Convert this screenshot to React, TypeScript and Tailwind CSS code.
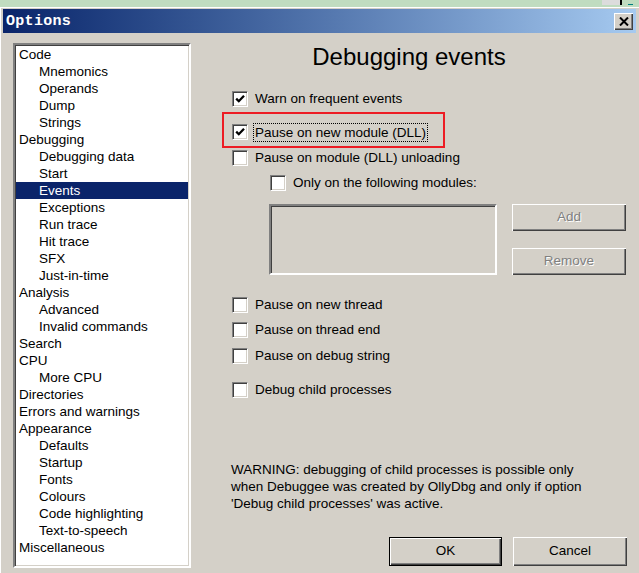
import React from "react";

const font = { fontFamily: '"Liberation Sans", Arial, sans-serif' };

const treeItems: { label: string; level: number; selected?: boolean }[] = [
  { label: "Code", level: 0 },
  { label: "Mnemonics", level: 1 },
  { label: "Operands", level: 1 },
  { label: "Dump", level: 1 },
  { label: "Strings", level: 1 },
  { label: "Debugging", level: 0 },
  { label: "Debugging data", level: 1 },
  { label: "Start", level: 1 },
  { label: "Events", level: 1, selected: true },
  { label: "Exceptions", level: 1 },
  { label: "Run trace", level: 1 },
  { label: "Hit trace", level: 1 },
  { label: "SFX", level: 1 },
  { label: "Just-in-time", level: 1 },
  { label: "Analysis", level: 0 },
  { label: "Advanced", level: 1 },
  { label: "Invalid commands", level: 1 },
  { label: "Search", level: 0 },
  { label: "CPU", level: 0 },
  { label: "More CPU", level: 1 },
  { label: "Directories", level: 0 },
  { label: "Errors and warnings", level: 0 },
  { label: "Appearance", level: 0 },
  { label: "Defaults", level: 1 },
  { label: "Startup", level: 1 },
  { label: "Fonts", level: 1 },
  { label: "Colours", level: 1 },
  { label: "Code highlighting", level: 1 },
  { label: "Text-to-speech", level: 1 },
  { label: "Miscellaneous", level: 0 },
];

function Checkbox({ checked }: { checked?: boolean }) {
  return (
    <span className="flex h-[16px] w-[16px] shrink-0 border border-b-white border-l-[#808080] border-r-white border-t-[#808080] bg-white shadow-[inset_1px_1px_0_#404040,inset_-1px_-1px_0_#d4d0c8]">
      {checked && (
        <svg width="14" height="14" viewBox="0 0 14 14">
          <path d="M3.2 6.6 L5.8 9.2 L11 3.8" fill="none" stroke="#000" strokeWidth="2.3" />
        </svg>
      )}
    </span>
  );
}

function CheckRow({ label, checked, className }: { label: string; checked?: boolean; className: string }) {
  return (
    <div className={`flex h-[16px] items-center gap-[7px] ${className}`}>
      <Checkbox checked={checked} />
      <span className="whitespace-nowrap text-[13.5px] leading-[16px] text-black">{label}</span>
    </div>
  );
}

const raised =
  "bg-[#d4d0c8] shadow-[inset_1px_1px_0_#ffffff,inset_-1px_-1px_0_#404040,inset_-2px_-2px_0_#808080]";

export default function App() {
  return (
    <div className="flex h-[573px] w-[639px] flex-col overflow-hidden bg-[#d4d0c8]" style={font}>
      {/* desktop strip above the dialog */}
      <div className="flex h-[7px] items-start justify-end bg-[#c0dcc0] pr-[6px]">
        <div className="mt-0 h-[5px] w-[18px] bg-[#dcdcdc]" />
        <div className="h-[5px] w-[2px] bg-black" />
        <div className="ml-[6px] mt-[4px] h-[1px] w-[5px] bg-[#008080]" />
      </div>

      <div className="flex flex-1 flex-col px-[3px] pt-[2px] shadow-[inset_1px_1px_0_#ffffff]">
        {/* title bar */}
        <div className="flex h-[24px] items-center justify-between bg-gradient-to-r from-[#0a246a] to-[#a6caf0] pl-[3px] pr-[3px]">
          <span
            className="text-[15px] font-bold leading-none tracking-[0.3px] text-white"
            style={{ fontFamily: '"Liberation Mono", "DejaVu Sans Mono", monospace' }}
          >
            Options
          </span>
          <button className={`flex h-[17px] w-[19px] items-center justify-center ${raised}`}>
            <svg width="10" height="9" viewBox="0 0 10 9">
              <path d="M1 0.5 L9 8.5 M9 0.5 L1 8.5" stroke="#000" strokeWidth="2" />
            </svg>
          </button>
        </div>

        <div className="flex flex-1 pl-[10px] pt-[10px]">
          {/* tree list */}
          <div className="h-[525px] w-[178px] border-2 border-b-white border-l-[#808080] border-r-white border-t-[#808080] bg-white shadow-[inset_1px_1px_0_#404040,inset_-1px_-1px_0_#d4d0c8]">
            <div className="pt-px">
              {treeItems.map((item) => (
                <div
                  key={item.label}
                  className={`mx-px h-[17px] whitespace-nowrap text-[13.5px] leading-[17px] ${
                    item.level === 0 ? "pl-[3px]" : "pl-[23px]"
                  } ${item.selected ? "bg-[#0a246a] text-white" : "text-black"}`}
                >
                  {item.label}
                </div>
              ))}
            </div>
          </div>

          {/* settings panel */}
          <div className="flex flex-1 flex-col pr-[9px]">
            <h1 className="text-center text-[24px] font-normal leading-[28px] text-black">Debugging events</h1>

            <CheckRow className="ml-[41px] mt-[20px]" label="Warn on frequent events" checked />

            <div className="relative ml-[41px] mt-[17px] flex h-[16px] items-center gap-[5px]">
              <div className="pointer-events-none absolute left-[-10px] top-[-12px] h-[36px] w-[223px] border-2 border-[#ed1c24]" />
              <Checkbox checked />
              <span className="whitespace-nowrap border border-dotted border-black px-px text-[13.5px] leading-[17px] text-black">
                Pause on new module (DLL)
              </span>
            </div>

            <CheckRow className="ml-[41px] mt-[10px]" label="Pause on module (DLL) unloading" />
            <CheckRow className="ml-[79px] mt-[9px]" label="Only on the following modules:" />

            <div className="ml-[78px] mt-[13px] flex gap-[15px]">
              <div className="h-[71px] w-[228px] border-2 border-b-white border-l-[#808080] border-r-white border-t-[#808080] bg-[#d4d0c8] shadow-[inset_1px_1px_0_#404040,inset_-1px_-1px_0_#d4d0c8]" />
              <div className="flex flex-col gap-[17px]">
                {["Add", "Remove"].map((b) => (
                  <div
                    key={b}
                    className={`flex h-[27px] w-[114px] items-center justify-center text-[13.5px] text-[#808080] [text-shadow:1px_1px_0_#ffffff] ${raised}`}
                  >
                    {b}
                  </div>
                ))}
              </div>
            </div>

            <CheckRow className="ml-[41px] mt-[22px]" label="Pause on new thread" />
            <CheckRow className="ml-[41px] mt-[9px]" label="Pause on thread end" />
            <CheckRow className="ml-[41px] mt-[10px]" label="Pause on debug string" />
            <CheckRow className="ml-[41px] mt-[18px]" label="Debug child processes" />

            <p className="ml-[40px] mt-[63px] whitespace-nowrap text-[13.5px] leading-[17px] text-black">
              WARNING: debugging of child processes is possible only
              <br />
              when Debuggee was created by OllyDbg and only if option
              <br />
              'Debug child processes' was active.
            </p>

            <div className="mt-[25px] flex justify-end gap-[11px]">
              <button className="h-[29px] w-[113px] border border-black text-[13.5px] text-black">
                <div className={`flex h-full w-full items-center justify-center ${raised}`}>OK</div>
              </button>
              <button className={`flex h-[29px] w-[114px] items-center justify-center text-[13.5px] text-black ${raised}`}>
                Cancel
              </button>
            </div>
          </div>
        </div>
      </div>
    </div>
  );
}
